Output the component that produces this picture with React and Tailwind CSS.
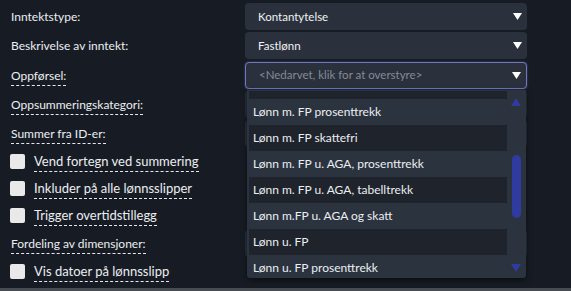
import React from "react";

function Caret({ className = "" }) {
  return (
    <svg width="9" height="7" viewBox="0 0 9 7" className={className}>
      <path d="M0 0 H9 L4.5 7 Z" fill="currentColor" />
    </svg>
  );
}

function Select({ value, placeholder, focused }) {
  return (
    <div
      className={
        "flex items-center justify-between w-[282px] h-[27px] rounded-[4px] bg-[#2a313d] pl-[13px] pr-[5px] " +
        (focused
          ? "border border-[#6f78bf] shadow-[0_0_2px_rgba(111,120,191,0.6)] pl-[12px]"
          : "")
      }
    >
      {value ? (
        <span className="text-[#f1f2f4] text-[11.5px]">{value}</span>
      ) : (
        <span className="text-[#858b95] text-[11.5px]">{placeholder}</span>
      )}
      <Caret className="text-white" />
    </div>
  );
}

function Label({ children, dashed, small }) {
  return (
    <span
      className={
        "inline-block leading-[15px] " +
        (small ? "text-[12px] " : "text-[13px] ") +
        (dashed ? "border-b border-dashed border-[#e6e8eb] pb-[2px] pt-[3px]" : "")
      }
    >
      {children}
    </span>
  );
}

function Row({ h, children, right }) {
  return (
    <div className={"flex items-center " + h}>
      <div className="w-[245px] pl-[11px] flex items-center">{children}</div>
      {right}
    </div>
  );
}

function Check({ label }) {
  return (
    <div className="flex items-center">
      <div className="w-[15px] h-[15px] rounded-[2px] bg-[#e9e9e9] mr-[9px] -ml-[1px]" />
      <Label dashed>{label}</Label>
    </div>
  );
}

const items = [
  "Lønn m. FP",
  "Lønn m. FP prosenttrekk",
  "Lønn m. FP skattefri",
  "Lønn m. FP u. AGA, prosenttrekk",
  "Lønn m. FP u. AGA, tabelltrekk",
  "Lønn m.FP u. AGA og skatt",
  "Lønn u. FP",
  "Lønn u. FP prosenttrekk",
  "Lønn u. FP skattefri",
];

function Dropdown() {
  return (
    <div className="absolute left-[247px] top-[90px] w-[279px] h-[188px] bg-[#2b333f] rounded-b-[3px] shadow-[0_2px_6px_rgba(0,0,0,0.55)] flex pl-[2px] pt-[1px] text-[12px] text-[#eceef1]">
      <div className="w-[258px] h-[187px] overflow-hidden">
        <div className="flex flex-col -mt-[18px]">
          {items.map((t, i) => (
            <div
              key={t}
              className={
                "h-[26px] shrink-0 flex items-center pl-[4px] " +
                (i % 2 === 0 ? "bg-[#1e232c]" : "")
              }
            >
              {t}
            </div>
          ))}
        </div>
      </div>
      <div className="flex-1 relative">
        <svg width="10" height="8" viewBox="0 0 10 8" className="absolute left-[4px] top-[7px] text-[#2f3b9e]">
          <path d="M5 0 L10 8 H0 Z" fill="currentColor" />
        </svg>
        <div className="absolute left-[5px] top-[64px] w-[9px] h-[63px] rounded-full bg-[#2f3b9e]" />
        <svg width="10" height="8" viewBox="0 0 10 8" className="absolute left-[4px] top-[173px] text-[#2f3b9e]">
          <path d="M0 0 H10 L5 8 Z" fill="currentColor" />
        </svg>
      </div>
    </div>
  );
}

export default function App() {
  return (
    <div className="relative w-[571px] h-[291px] overflow-hidden bg-[#171c24] text-[13px] text-[#eceef1] font-['Lato',sans-serif]">
      <div className="flex flex-col pt-[2px]">
        <Row h="h-[29px]" right={<Select value="Kontantytelse" />}>
          <Label small>Inntektstype:</Label>
        </Row>
        <Row h="h-[29px]" right={<Select value="Fastlønn" />}>
          <Label small>Beskrivelse av inntekt:</Label>
        </Row>
        <Row h="h-[30px]" right={<Select placeholder="<Nedarvet, klik for at overstyre>" focused />}>
          <Label small dashed>Oppførsel:</Label>
        </Row>
        <Row h="h-[29px]" right={<Select placeholder="" />}>
          <Label small dashed>Oppsummeringskategori:</Label>
        </Row>
        <Row h="h-[28px]" right={<Select placeholder="" />}>
          <Label small dashed>Summer fra ID-er:</Label>
        </Row>
        <Row h="h-[28px]">
          <Check label="Vend fortegn ved summering" />
        </Row>
        <Row h="h-[27px]">
          <Check label="Inkluder på alle lønnsslipper" />
        </Row>
        <Row h="h-[27px]">
          <Check label="Trigger overtidstillegg" />
        </Row>
        <Row h="h-[28px]" right={<Select placeholder="" />}>
          <Label small dashed>Fordeling av dimensjoner:</Label>
        </Row>
        <Row h="h-[28px]">
          <Check label="Vis datoer på lønnsslipp" />
        </Row>
      </div>
      <div className="absolute left-0 right-0 bottom-0 h-[3px] bg-[#474c53]" />
      <Dropdown />
    </div>
  );
}
